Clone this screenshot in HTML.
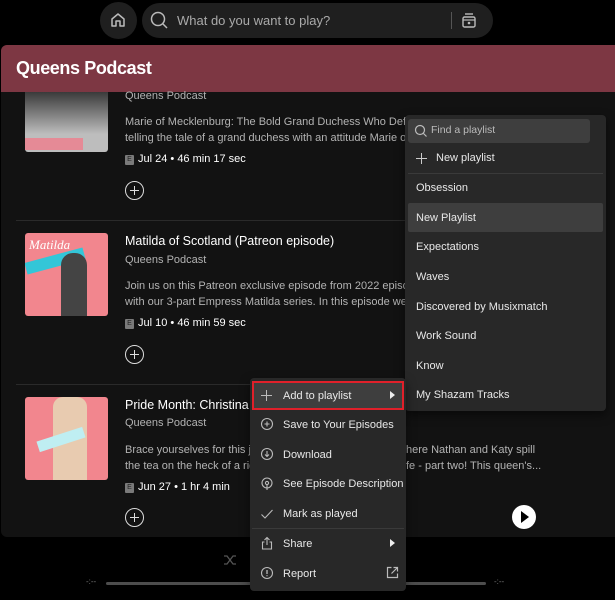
<!DOCTYPE html>
<html><head><style>
*{margin:0;padding:0;box-sizing:border-box}
body{width:615px;height:600px;background:#000;overflow:hidden;position:relative;font-family:"Liberation Sans",sans-serif;color:#fff}
.a{position:absolute}
.t{font-size:11px;color:#b3b3b3;white-space:nowrap}
.ttl{font-size:12.5px;color:#fff;white-space:nowrap}
.e{display:inline-block;width:9px;height:10px;background:#7a7a7a;color:#222;font-size:7px;text-align:center;line-height:10px;border-radius:1px;margin-right:4px;vertical-align:1px}
.date{font-size:11px;color:#fff;white-space:nowrap}
.plus{width:19px;height:19px;border:1.3px solid #ddd;border-radius:50%}
.plus:before{content:"";position:absolute;left:3.5px;top:7.5px;width:9px;height:1.3px;background:#ddd}
.plus:after{content:"";position:absolute;left:7.5px;top:3.5px;width:1.3px;height:9px;background:#ddd}
.mi{position:absolute;left:0;width:100%;font-size:11px;color:#e8e8e8;white-space:nowrap}
</style></head><body>
<div class="a" style="left:100px;top:2px;width:37px;height:37px;border-radius:50%;background:#1f1f1f"></div>
<svg class="a" style="left:109px;top:11px" width="18" height="18" viewBox="0 0 18 18"><path d="M3 8 L9 3 L15 8 V15 H11 V10 H7 V15 H3 Z" fill="none" stroke="#bbb" stroke-width="1.5" stroke-linejoin="round"/></svg>
<div class="a" style="left:142px;top:3px;width:351px;height:35px;border-radius:18px;background:#1f1f1f"></div>
<svg class="a" style="left:149px;top:10px" width="20" height="20" viewBox="0 0 20 20"><circle cx="9" cy="9" r="6.5" fill="none" stroke="#bbb" stroke-width="1.5"/><path d="M14 14 L18 18" stroke="#bbb" stroke-width="1.5"/></svg>
<div class="a t" style="left:177px;top:13px;font-size:13px;color:#aaa">What do you want to play?</div>
<div class="a" style="left:451px;top:12px;width:1px;height:17px;background:#555"></div>
<svg class="a" style="left:460px;top:11px" width="18" height="18" viewBox="0 0 18 18"><rect x="3" y="6" width="12" height="10" rx="1.5" fill="none" stroke="#bbb" stroke-width="1.4"/><path d="M5 3 H13" stroke="#bbb" stroke-width="1.4"/><path d="M3 9 H15" stroke="#bbb" stroke-width="1.2"/><circle cx="9" cy="12" r="1.3" fill="#bbb"/></svg>

<div class="a" style="left:1px;top:45px;width:620px;height:492px;background:#121212;border-radius:6px;overflow:hidden">
<div class="a" style="left:0;top:0;width:100%;height:47px;background:#7d3743"></div>
</div>
<div class="a" style="left:16px;top:58px;font-size:18px;font-weight:bold;letter-spacing:-0.4px">Queens Podcast</div>

<!-- ep1 -->
<div class="a" style="left:25px;top:92px;width:83px;height:60px;background:linear-gradient(#3a3a3a,#bdbdbd 70%);border-radius:0 0 3px 3px"></div>
<div class="a" style="left:25px;top:138px;width:58px;height:12px;background:#e58a96"></div>
<div class="a t" style="left:125px;top:90px">Queens Podcast</div>
<div class="a t" style="left:125px;top:116px">Marie of Mecklenburg: The Bold Grand Duchess Who Defied</div>
<div class="a t" style="left:125px;top:132px">telling the tale of a grand duchess with an attitude Marie of l</div>
<div class="a date" style="left:125px;top:153px"><span class="e">E</span>Jul 24 • 46 min 17 sec</div>
<div class="a plus" style="left:125px;top:181px"></div>
<div class="a" style="left:16px;top:220px;width:400px;height:1px;background:#2a2a2a"></div>

<!-- ep2 -->
<div class="a" style="left:25px;top:233px;width:83px;height:83px;background:#f2868e;border-radius:3px;overflow:hidden">
<div class="a" style="left:0;top:22px;width:60px;height:12px;background:#33c6d8;transform:rotate(-15deg)"></div>
<div class="a" style="left:36px;top:20px;width:26px;height:63px;background:#444;border-radius:12px 12px 0 0"></div>
<div class="a" style="left:4px;top:4px;font-size:13px;font-style:italic;color:#fff;font-family:'Liberation Serif',serif">Matilda</div>
</div>
<div class="a ttl" style="left:125px;top:234px">Matilda of Scotland (Patreon episode)</div>
<div class="a t" style="left:125px;top:254px">Queens Podcast</div>
<div class="a t" style="left:125px;top:280px">Join us on this Patreon exclusive episode from 2022 episode</div>
<div class="a t" style="left:125px;top:296px">with our 3-part Empress Matilda series. In this episode we're</div>
<div class="a date" style="left:125px;top:317px"><span class="e">E</span>Jul 10 • 46 min 59 sec</div>
<div class="a plus" style="left:125px;top:345px"></div>
<div class="a" style="left:16px;top:384px;width:400px;height:1px;background:#2a2a2a"></div>

<!-- ep3 -->
<div class="a" style="left:25px;top:397px;width:83px;height:83px;background:#f2868e;border-radius:3px;overflow:hidden">
<div class="a" style="left:28px;top:0;width:34px;height:83px;background:#e8cbb0;border-radius:10px 10px 0 0"></div>
<div class="a" style="left:12px;top:37px;width:48px;height:11px;background:#bfeef2;transform:rotate(-18deg)"></div>
</div>
<div class="a ttl" style="left:125px;top:398px">Pride Month: Christina o</div>
<div class="a t" style="left:125px;top:417px">Queens Podcast</div>
<div class="a t" style="left:125px;top:444px">Brace yourselves for this jui</div>
<div class="a t" style="left:125px;top:460px">the tea on the heck of a rid</div>
<div class="a t" style="left:406px;top:444px">here Nathan and Katy spill</div>
<div class="a t" style="left:406px;top:460px">fe - part two! This queen's...</div>
<div class="a date" style="left:125px;top:481px"><span class="e">E</span>Jun 27 • 1 hr 4 min</div>
<div class="a plus" style="left:125px;top:508px"></div>
<div class="a" style="left:512px;top:505px;width:24px;height:24px;border-radius:50%;background:#fff"></div>
<div class="a" style="left:521px;top:511px;width:0;height:0;border-left:8px solid #000;border-top:6px solid transparent;border-bottom:6px solid transparent"></div>

<!-- bottom -->
<svg class="a" style="left:223px;top:553px" width="14" height="14" viewBox="0 0 14 14"><path d="M1 3 H4 L10 11 H13 M1 11 H4 L10 3 H13" fill="none" stroke="#555" stroke-width="1.3"/></svg>
<div class="a" style="left:106px;top:582px;width:380px;height:3px;border-radius:2px;background:#4d4d4d"></div>
<div class="a t" style="left:86px;top:577px;font-size:8px;color:#777">-:--</div>
<div class="a t" style="left:494px;top:577px;font-size:8px;color:#777">-:--</div>

<!-- submenu -->
<div class="a" style="left:405px;top:115px;width:201px;height:296px;background:#282828;border-radius:4px;box-shadow:0 4px 10px rgba(0,0,0,.5)">
<div class="a" style="left:3px;top:4px;width:182px;height:24px;background:#3e3e3e;border-radius:3px"></div>
<svg class="a" style="left:9px;top:9px" width="14" height="14" viewBox="0 0 14 14"><circle cx="6" cy="6" r="4.5" fill="none" stroke="#bbb" stroke-width="1.2"/><path d="M9.5 9.5 L12.5 12.5" stroke="#bbb" stroke-width="1.2"/></svg>
<div class="a t" style="left:26px;top:9px;font-size:10.5px;color:#bbb">Find a playlist</div>
<div class="a" style="left:11px;top:43px;width:11px;height:1.3px;background:#ccc"></div>
<div class="a" style="left:16px;top:38px;width:1.3px;height:11px;background:#ccc"></div>
<div class="mi" style="left:31px;top:37px">New playlist</div>
<div class="a" style="left:3px;top:58px;width:195px;height:1px;background:#3a3a3a"></div>
<div class="mi" style="left:11px;top:67px">Obsession</div>
<div class="a" style="left:3px;top:88px;width:195px;height:29px;background:#3e3e3e;border-radius:2px"></div>
<div class="mi" style="left:11px;top:97px">New Playlist</div>
<div class="mi" style="left:11px;top:126px">Expectations</div>
<div class="mi" style="left:11px;top:156px">Waves</div>
<div class="mi" style="left:11px;top:186px">Discovered by Musixmatch</div>
<div class="mi" style="left:11px;top:215px">Work Sound</div>
<div class="mi" style="left:11px;top:245px">Know</div>
<div class="mi" style="left:11px;top:274px">My Shazam Tracks</div>
</div>

<!-- context menu -->
<div class="a" style="left:250px;top:378px;width:156px;height:213px;background:#282828;border-radius:4px;box-shadow:0 4px 10px rgba(0,0,0,.5)">
<div class="a" style="left:2px;top:3px;width:152px;height:29px;background:#3e3e3e;border:2.5px solid #e0202a"></div>
<div class="a" style="left:11px;top:17px;width:11px;height:1.3px;background:#bbb"></div>
<div class="a" style="left:16px;top:12px;width:1.3px;height:11px;background:#bbb"></div>
<div class="mi" style="left:33px;top:12px">Add to playlist</div>
<div class="a" style="left:140px;top:13px;border-left:5px solid #eee;border-top:4px solid transparent;border-bottom:4px solid transparent"></div>
<svg class="a" style="left:10px;top:39px" width="14" height="14" viewBox="0 0 14 14"><circle cx="7" cy="7" r="5.5" fill="none" stroke="#bbb" stroke-width="1.1"/><path d="M7 4.5 V9.5 M4.5 7 H9.5" stroke="#bbb" stroke-width="1.1"/></svg>
<div class="mi" style="left:33px;top:41px">Save to Your Episodes</div>
<svg class="a" style="left:10px;top:69px" width="14" height="14" viewBox="0 0 14 14"><circle cx="7" cy="7" r="5.5" fill="none" stroke="#bbb" stroke-width="1.1"/><path d="M7 4 V9.5 M5 7.5 L7 9.5 L9 7.5" fill="none" stroke="#bbb" stroke-width="1.1"/></svg>
<div class="mi" style="left:33px;top:71px">Download</div>
<svg class="a" style="left:10px;top:99px" width="14" height="14" viewBox="0 0 14 14"><circle cx="7" cy="6" r="5" fill="none" stroke="#bbb" stroke-width="1.1"/><circle cx="7" cy="6" r="1.6" fill="none" stroke="#bbb" stroke-width="1.1"/><path d="M7 8 V13" stroke="#bbb" stroke-width="1.1"/></svg>
<div class="mi" style="left:33px;top:100px">See Episode Description</div>
<svg class="a" style="left:10px;top:129px" width="14" height="14" viewBox="0 0 14 14"><path d="M1.5 7.5 L5 11 L12.5 3" fill="none" stroke="#bbb" stroke-width="1.1"/></svg>
<div class="mi" style="left:33px;top:130px">Mark as played</div>
<div class="a" style="left:2px;top:150px;width:152px;height:1px;background:#3a3a3a"></div>
<svg class="a" style="left:10px;top:158px" width="14" height="14" viewBox="0 0 14 14"><path d="M4.5 6 H2.5 V13 H11.5 V6 H9.5 M7 9 V1.5 M4.5 4 L7 1.5 L9.5 4" fill="none" stroke="#bbb" stroke-width="1.1"/></svg>
<div class="mi" style="left:33px;top:160px">Share</div>
<div class="a" style="left:140px;top:161px;border-left:5px solid #eee;border-top:4px solid transparent;border-bottom:4px solid transparent"></div>
<svg class="a" style="left:10px;top:188px" width="14" height="14" viewBox="0 0 14 14"><circle cx="7" cy="7" r="5.5" fill="none" stroke="#bbb" stroke-width="1.1"/><path d="M7 4 V8 M7 9.3 V10.3" stroke="#bbb" stroke-width="1.3"/></svg>
<div class="mi" style="left:33px;top:190px">Report</div>
<svg class="a" style="left:136px;top:188px" width="13" height="13" viewBox="0 0 13 13"><path d="M5.5 1.5 H1.5 V11.5 H11.5 V7.5 M7.5 1.5 H11.5 V5.5 M11.5 1.5 L5.5 7.5" fill="none" stroke="#bbb" stroke-width="1.2"/></svg>
</div>
</body></html>
